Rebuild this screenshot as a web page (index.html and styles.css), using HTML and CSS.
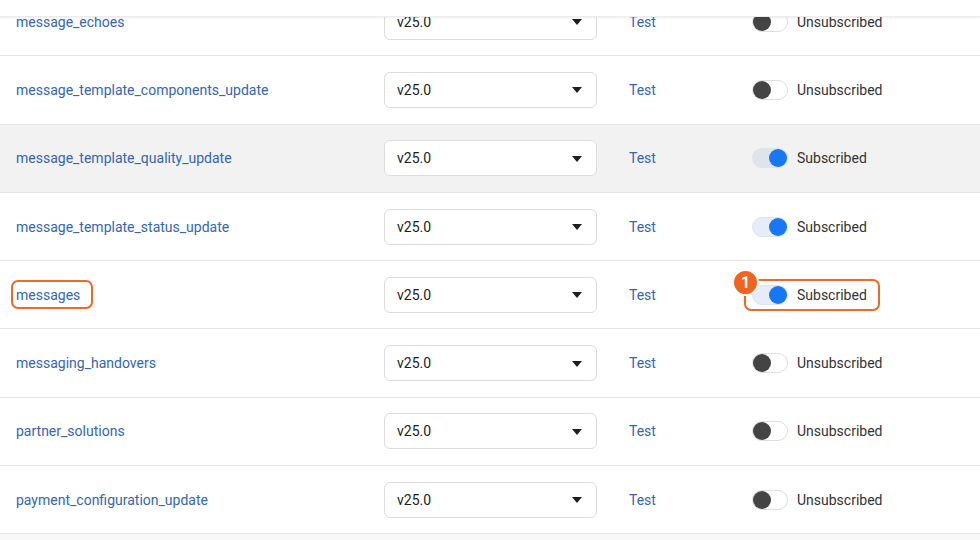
FILE: index.html
```html
<!DOCTYPE html>
<html lang="en">
<head>
    <meta charset="UTF-8">
    <meta name="viewport" content="width=device-width, initial-scale=1.0">
    <title>Webhook fields</title>
    <link rel="stylesheet" href="styles.css">
</head>
<body>
    <!-- sticky header of the table, scrolled away -->
    <div class="sticky-head"></div>

    <div class="fields">
        <div class="row">
            <a class="field-name">message_echoes</a>
            <div class="version"><span>v25.0</span><i class="caret"></i></div>
            <a class="test">Test</a>
            <div class="sub"><span class="toggle"></span><span class="label">Unsubscribed</span></div>
        </div>
        <div class="row">
            <a class="field-name">message_template_components_update</a>
            <div class="version"><span>v25.0</span><i class="caret"></i></div>
            <a class="test">Test</a>
            <div class="sub"><span class="toggle"></span><span class="label">Unsubscribed</span></div>
        </div>
        <div class="row hover">
            <a class="field-name">message_template_quality_update</a>
            <div class="version"><span>v25.0</span><i class="caret"></i></div>
            <a class="test">Test</a>
            <div class="sub"><span class="toggle on"></span><span class="label">Subscribed</span></div>
        </div>
        <div class="row">
            <a class="field-name">message_template_status_update</a>
            <div class="version"><span>v25.0</span><i class="caret"></i></div>
            <a class="test">Test</a>
            <div class="sub"><span class="toggle on"></span><span class="label">Subscribed</span></div>
        </div>
        <div class="row">
            <a class="field-name"><span class="mark mark-name">messages</span></a>
            <div class="version"><span>v25.0</span><i class="caret"></i></div>
            <a class="test">Test</a>
            <div class="sub mark mark-sub">
                <span class="badge">1</span>
                <span class="toggle on"></span><span class="label">Subscribed</span>
            </div>
        </div>
        <div class="row">
            <a class="field-name">messaging_handovers</a>
            <div class="version"><span>v25.0</span><i class="caret"></i></div>
            <a class="test">Test</a>
            <div class="sub"><span class="toggle"></span><span class="label">Unsubscribed</span></div>
        </div>
        <div class="row">
            <a class="field-name">partner_solutions</a>
            <div class="version"><span>v25.0</span><i class="caret"></i></div>
            <a class="test">Test</a>
            <div class="sub"><span class="toggle"></span><span class="label">Unsubscribed</span></div>
        </div>
        <div class="row">
            <a class="field-name">payment_configuration_update</a>
            <div class="version"><span>v25.0</span><i class="caret"></i></div>
            <a class="test">Test</a>
            <div class="sub"><span class="toggle"></span><span class="label">Unsubscribed</span></div>
        </div>
        <div class="row next"></div>
    </div>
</body>
</html>
```

FILE: styles.css
```css
/* Global styles */
body {
    font-family: Roboto, "Liberation Sans", Arial, sans-serif;
    font-size: 14px;
    margin: 0;
    padding: 0;
    background-color: #fff;
    color: #1c1e21;
    overflow: hidden;
}

/* Header that stays on top while scrolling */
.sticky-head {
    position: fixed;
    top: 0;
    left: 0;
    right: 0;
    height: 16px;
    background-color: #fff;
    box-shadow: 0 1px 2px rgba(0, 0, 0, 0.08);
    border-bottom: 1px solid #ececec;
    z-index: 5;
}

.fields {
    margin-top: -12px;
}

.row {
    display: grid;
    grid-template-columns: 368px 245px 123px 1fr;
    align-items: center;
    height: 68.3px;
    box-sizing: border-box;
    padding-left: 16px;
    border-bottom: 1px solid #e6e6e6;
}

.row.hover {
    background-color: #f2f2f2;
}

.row.next {
    background-color: #f8f8f8;
}

.field-name,
.test {
    color: #3566b0;
    text-decoration: none;
}

/* Version select */
.version {
    display: flex;
    align-items: center;
    justify-content: space-between;
    width: 213px;
    height: 36px;
    box-sizing: border-box;
    padding: 0 14px 0 12px;
    background-color: #fff;
    border: 1px solid #dcdcdc;
    border-radius: 6px;
    color: #1c1e21;
}

.caret {
    width: 0;
    height: 0;
    border-left: 5.5px solid transparent;
    border-right: 5.5px solid transparent;
    border-top: 6px solid #1c1e21;
    margin-top: 1px;
}

/* Subscribe switch */
.sub {
    display: flex;
    align-items: center;
    gap: 9px;
    justify-self: start;
    color: #333;
}

.toggle {
    position: relative;
    width: 36px;
    height: 20px;
    box-sizing: border-box;
    border: 1px solid #dedede;
    border-radius: 10px;
    background-color: #fff;
}

.toggle::after {
    content: '';
    position: absolute;
    top: 0;
    left: 0;
    width: 18px;
    height: 18px;
    border-radius: 50%;
    background-color: #444;
}

.toggle.on {
    background-color: #e6edf9;
    border-color: #dde4ef;
}

.hover .toggle.on {
    background-color: #dfe3ea;
}

.toggle.on::after {
    left: auto;
    right: 0;
    background-color: #1877f2;
}

/* Orange annotation outlines */
.mark {
    position: relative;
}

.mark::after {
    content: '';
    position: absolute;
    border: 2px solid #ec6a2c;
    border-radius: 7px;
    pointer-events: none;
}

.mark-name::after {
    left: -5px;
    right: -13px;
    top: -7px;
    bottom: -6px;
}

.mark-sub::after {
    left: -8px;
    right: -13px;
    top: -6px;
    bottom: -6px;
}

.badge {
    position: absolute;
    left: -20px;
    top: -16px;
    width: 23px;
    height: 23px;
    border: 2px solid #fff;
    border-radius: 50%;
    background-color: #f0641f;
    color: #fff;
    font-weight: bold;
    font-size: 16px;
    line-height: 23px;
    text-align: center;
    z-index: 2;
}
```
